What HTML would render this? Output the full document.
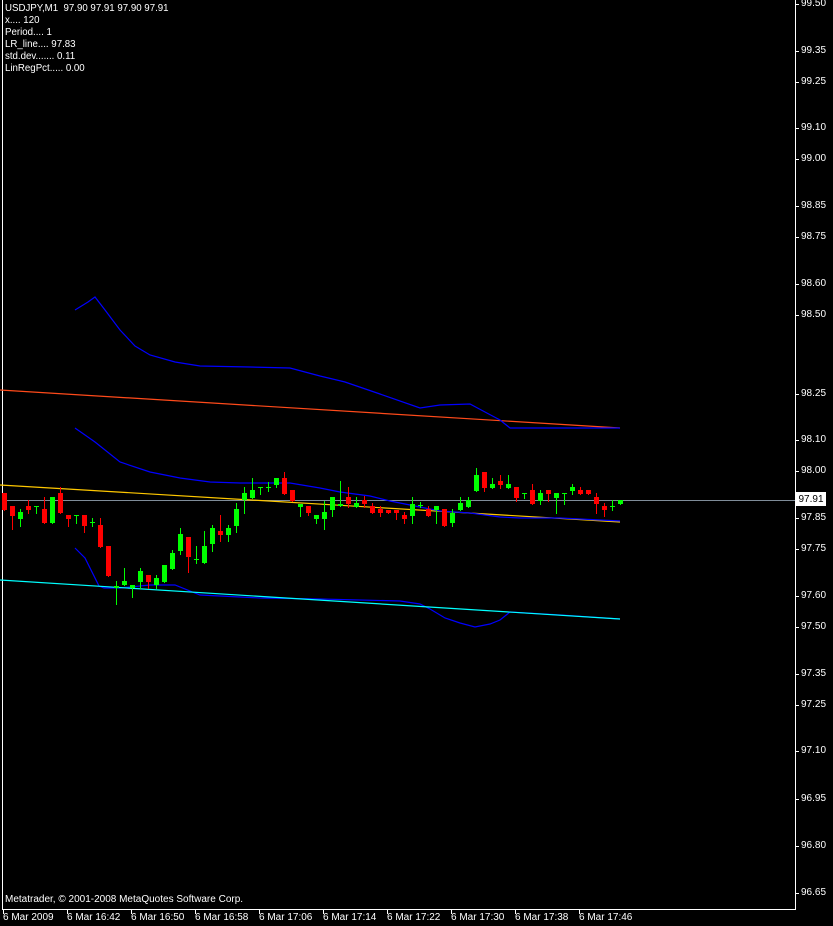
<!DOCTYPE html>
<html><head><meta charset="utf-8"><style>
html,body{margin:0;padding:0;background:#000;}
body{width:833px;height:926px;overflow:hidden;position:relative;font-family:"Liberation Sans","DejaVu Sans",sans-serif;font-size:10px;color:#fff;}
.t{position:absolute;white-space:nowrap;line-height:12px;}
.h{font-size:9.7px;}
</style></head><body>
<svg id="s" width="833" height="926" style="position:absolute;left:0;top:0" xmlns="http://www.w3.org/2000/svg">
<line x1="2.5" y1="0" x2="2.5" y2="909.5" stroke="#fff"/>
<line x1="795.5" y1="0" x2="795.5" y2="909.5" stroke="#fff"/>
<line x1="2" y1="909.5" x2="796" y2="909.5" stroke="#fff"/>
<line x1="3" y1="500.5" x2="795" y2="500.5" stroke="#7f8c99"/>
<line x1="0" y1="390" x2="620" y2="428" stroke="#ff4a1a" stroke-width="1.2"/>
<line x1="0" y1="485" x2="620" y2="522" stroke="#ffc800" stroke-width="1.2"/>
<polyline fill="none" stroke="#0000ff" stroke-width="1.2" points="75,310 88,302 95,297 105,310 120,330 135,346 150,355 175,362 200,366 250,367 290,368 320,376 345,382 380,394 420,408 440,405 470,404 485,412 500,420 510,428 560,428 620,428"/>
<polyline fill="none" stroke="#0000ff" stroke-width="1.2" points="75,428 95,442 120,462 150,472 180,478 210,482 240,483 290,483 320,488 340,492 370,496 390,501 420,507 440,511 470,513 500,517 520,518 560,518 620,521"/>
<polyline fill="none" stroke="#0000ff" stroke-width="1.2" points="75,548 85,558 92,572 99,586 104,588 120,588 150,585 175,585 200,595 260,598 320,599 400,601 420,604 430,609 445,618 460,623 475,627 490,624 500,620 510,612 560,615 620,619"/>
<line x1="0" y1="580" x2="620" y2="619" stroke="#00ffff" stroke-width="1.2"/>
<g id="c"></g>
<g id="tk" stroke="#fff"></g>
</svg>
<div class="t h" style="left:5px;top:3px">USDJPY,M1&nbsp; 97.90 97.91 97.90 97.91</div>
<div class="t h" style="left:5px;top:15px">x.... 120</div>
<div class="t h" style="left:5px;top:27px">Period.... 1</div>
<div class="t h" style="left:5px;top:39px">LR_line.... 97.83</div>
<div class="t h" style="left:5px;top:51px">std.dev....... 0.11</div>
<div class="t h" style="left:5px;top:63px">LinRegPct..... 0.00</div>
<div class="t" style="left:5px;top:894px">Metatrader, © 2001-2008 MetaQuotes Software Corp.</div>
<div id="ax"></div>
<div class="t" style="left:796px;top:492px;width:30px;height:14px;background:#fff;color:#000;text-align:center;line-height:15px">97.91</div>
<script>
var C=[
[493,510,493,510,0],[506,516,506,529,0],[512,519,509,526,1],[506,510,500,513,0],[506,507,506,513,1],[509,523,497,523,0],[497,523,497,523,1],[493,513,487,513,0],
[515,519,515,526,0],[515,516,515,523,1],[515,526,515,532,0],[522,523,518,526,1],[525,547,518,547,0],[546,576,546,576,0],[586,588,581,604,1],[581,585,568,585,1],
[585,588,585,597,1],[571,582,568,588,1],[575,582,575,588,0],[578,585,575,588,1],[565,582,565,582,1],[553,569,550,569,1],[534,551,528,554,1],[537,557,537,572,0],
[559,560,546,563,1],[546,563,531,563,1],[528,544,525,551,1],[531,535,515,541,0],[528,535,525,541,1],[509,526,503,532,1],[493,500,487,513,1],[490,498,478,498,1],
[487,488,487,494,1],[487,488,482,491,1],[478,485,478,487,1],[478,494,472,494,0],[490,501,490,501,0],[504,507,504,516,1],[506,513,506,515,0],[515,519,515,523,1],
[512,519,501,529,1],[497,510,497,516,1],[504,506,481,506,1],[497,504,487,507,0],[503,507,497,507,1],[500,504,496,507,0],[506,513,503,513,0],[509,513,506,516,0],
[510,513,510,513,0],[510,513,510,519,0],[515,519,512,523,0],[504,516,497,523,1],[505,506,502,507,1],[509,516,506,516,0],[506,510,506,523,1],[509,526,509,526,0],
[513,523,509,526,1],[503,510,497,510,1],[500,507,497,507,1],[475,491,468,491,1],[472,488,472,491,0],[484,488,478,488,1],[481,485,475,488,0],[484,488,475,488,1],
[487,498,487,501,0],[493,494,493,498,1],[490,504,484,504,0],[493,501,490,504,1],[490,494,490,501,0],[493,498,493,513,1],[493,494,493,504,1],[487,491,484,494,1],
[490,494,487,494,0],[490,494,490,494,0],[497,504,493,513,0],[506,510,503,516,0],[506,507,500,510,1],[500,504,500,504,1]];
var g=document.getElementById('c'),h='';
C.forEach(function(c,i){var x=4+8*i,col=c[4]?'#00ff00':'#ff0000';
h+='<line x1="'+(x+0.5)+'" y1="'+c[2]+'" x2="'+(x+0.5)+'" y2="'+(c[3]+1)+'" stroke="'+col+'"/>';
h+='<rect x="'+(x-2)+'" y="'+c[0]+'" width="5" height="'+Math.max(1,c[1]-c[0])+'" fill="'+col+'"/>';});
g.innerHTML=h;
var P=[['99.50',4],['99.35',51],['99.25',82],['99.10',128],['99.00',159],['98.85',206],['98.75',237],['98.60',284],['98.50',315],['98.25',394],['98.10',440],['98.00',471],['97.85',518],['97.75',549],['97.60',596],['97.50',627],['97.35',674],['97.25',705],['97.10',751],['96.95',799],['96.80',846],['96.65',893]];
var a='',tk='';
P.forEach(function(p){a+='<div class="t" style="left:801px;top:'+(p[1]-6)+'px">'+p[0]+'</div>';tk+='<line x1="796" y1="'+(p[1]+0.5)+'" x2="799" y2="'+(p[1]+0.5)+'"/>';});
var T=['6 Mar 2009','6 Mar 16:42','6 Mar 16:50','6 Mar 16:58','6 Mar 17:06','6 Mar 17:14','6 Mar 17:22','6 Mar 17:30','6 Mar 17:38','6 Mar 17:46'];
T.forEach(function(t,i){var x=3+64*i;a+='<div class="t" style="left:'+x+'px;top:912px">'+t+'</div>';tk+='<line x1="'+(x+0.5)+'" y1="910" x2="'+(x+0.5)+'" y2="914"/>';});
document.getElementById('ax').innerHTML=a;document.getElementById('tk').innerHTML=tk;
</script>
</body></html>
